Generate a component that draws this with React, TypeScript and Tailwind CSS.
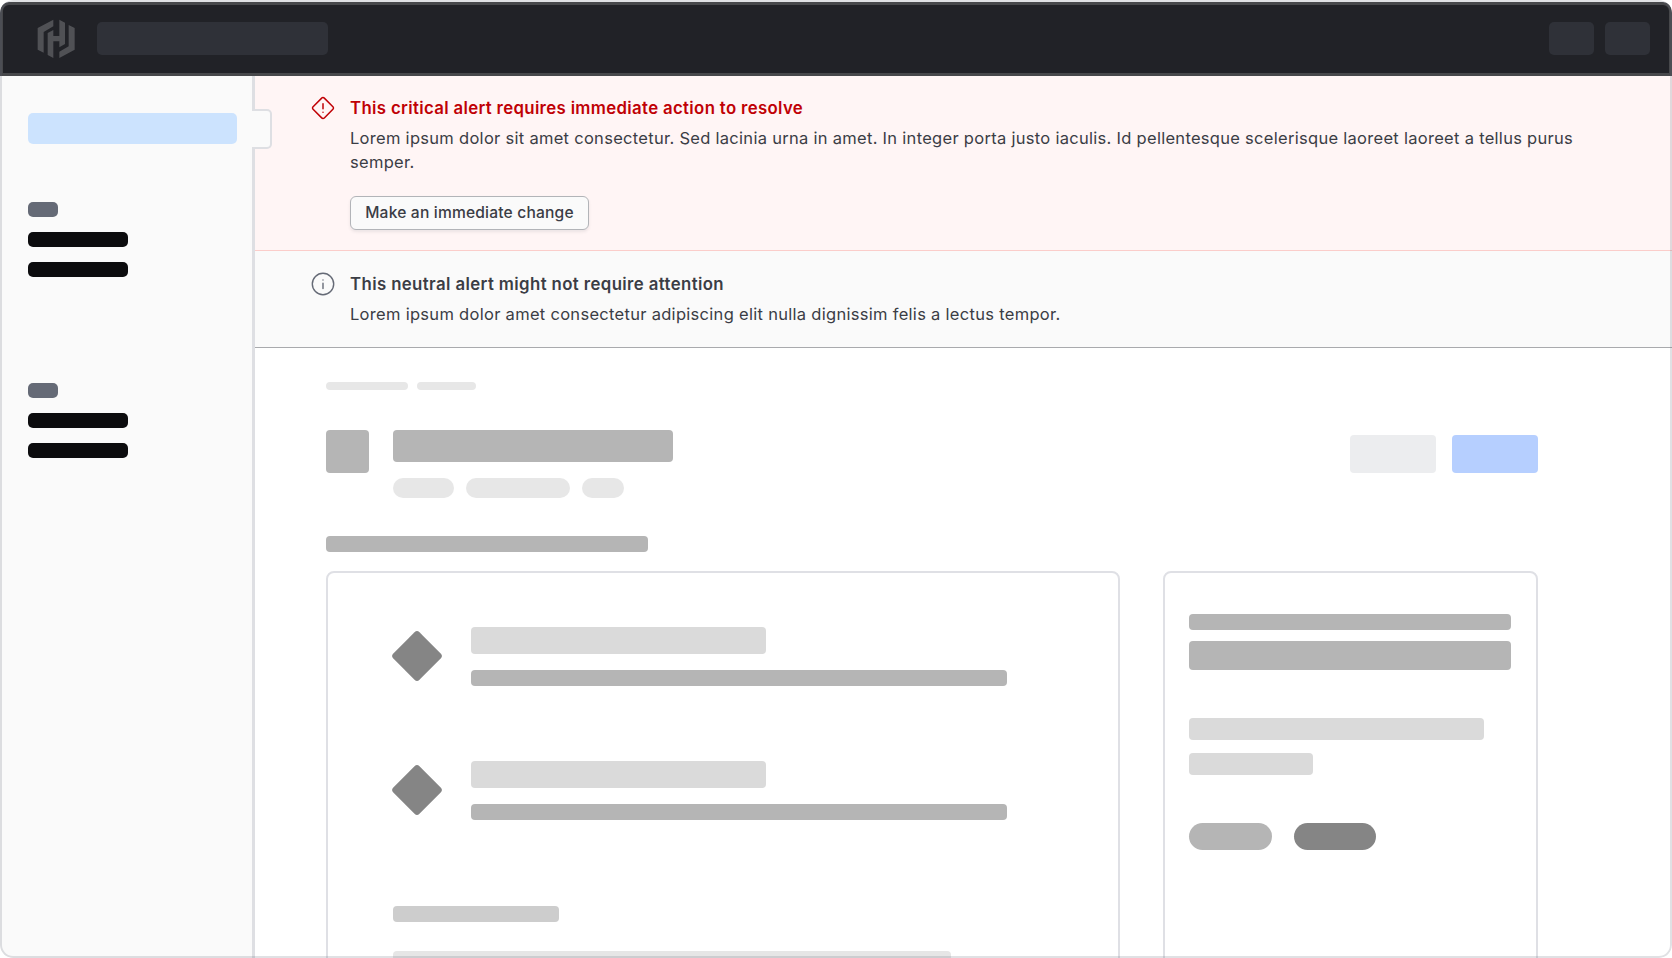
import React from "react";

function Bar({ className }: { className: string }) {
  return <div className={`shrink-0 ${className}`} />;
}

function Logo() {
  return (
    <svg className="ml-[31px] h-[58px] w-[44px]" viewBox="100 30 132 174" fill="#505155">
      <path d="M158 59 111 84V149L129 158V96L158 79Z" />
      <path d="M176 59 193 68V132L176 142V124H158V174L141 165V99L158 90V108H176Z" />
      <path d="M204 75 222 84V149L176 174V155L204 139Z" />
    </svg>
  );
}

function CriticalIcon() {
  return (
    <svg className="-mt-[0.3px] h-6 w-6 shrink-0" viewBox="0 0 24 24" fill="none" stroke="#c00005" strokeWidth="1.5" strokeLinecap="round" strokeLinejoin="round">
      <path d="M10.7 2.100 2.100 10.700a1.800 1.800 0 0 0 0 2.600L10.700 21.900a1.800 1.800 0 0 0 2.600 0L21.900 13.300a1.800 1.800 0 0 0 0-2.600L13.300 2.100a1.800 1.800 0 0 0-2.600 0Z" />
      <path d="M12 7.700v5M12 16.200v.1" />
    </svg>
  );
}

function InfoIcon() {
  return (
    <svg className="-mt-[0.3px] h-6 w-6 shrink-0" viewBox="0 0 24 24" fill="none" stroke="#656a76" strokeWidth="1.4" strokeLinecap="round">
      <circle cx="12" cy="12" r="10.700" />
      <path d="M12 11.300v5.300M12 7.900v.1" />
    </svg>
  );
}

function NavGroup() {
  return (
    <div className="flex flex-col gap-[15px]">
      <Bar className="h-[15.24px] w-[30.500px] rounded-[5px] bg-[#656a76]" />
      <Bar className="h-[15.24px] w-[100.500px] rounded-[5px] bg-[#0c0c0e]" />
      <Bar className="h-[15.24px] w-[100.500px] rounded-[5px] bg-[#0c0c0e]" />
    </div>
  );
}

function ListRow() {
  return (
    <div className="flex h-[134px] items-start">
      <div className="mt-[4px] mr-[28px] h-[51px] w-[51px] shrink-0">
        <svg viewBox="0 0 51 51" fill="#858585">
          <rect x="6.5" y="6.5" width="37" height="37" rx="3.500" transform="rotate(45 25 25)" />
        </svg>
      </div>
      <div className="flex flex-col gap-4">
        <Bar className="h-[27px] w-[295px] rounded-[4px] bg-[#dadada]" />
        <Bar className="h-4 w-[536px] rounded-[4px] bg-[#b5b5b5]" />
      </div>
    </div>
  );
}

export default function App() {
  return (
    <div className="relative flex h-[958px] w-[1672px] flex-col overflow-hidden rounded-[13px] bg-white pt-[2px] font-['Inter',sans-serif]">
      <header className="flex h-[74px] shrink-0 items-center rounded-t-[9px] border-[3px] border-[#47484b] bg-[#212227] pb-px">
        <Logo />
        <Bar className="ml-[19px] h-[33px] w-[231px] rounded-[5px] bg-[#2f3138]" />
        <Bar className="ml-auto h-[33px] w-[45px] rounded-[5px] bg-[#2f3138]" />
        <Bar className="mr-[19px] ml-[11px] h-[33px] w-[45px] rounded-[5px] bg-[#2f3138]" />
      </header>

      <div className="flex min-h-0 flex-1">
        <aside className="relative flex w-[254.500px] shrink-0 flex-col border-r-[3px] border-[#dedfe3] bg-[#fafafa] pt-[37px] pl-[27.500px]">
          <Bar className="h-[30.500px] w-[209.500px] rounded-[5px] bg-[#cce3fe]" />
          <div className="mt-[58px] flex flex-col gap-[105.500px]">
            <NavGroup />
            <NavGroup />
          </div>
          <div className="absolute top-[33px] left-[251.500px] h-10 w-5 rounded-r-[5px] border-2 border-l-0 border-[#dedfe3] bg-[#fafafa]" />
        </aside>

        <main className="flex min-w-0 flex-1 flex-col">
          <section className="flex h-[175px] shrink-0 gap-[15px] border-b border-[#fbcdca] bg-[#fff5f5] pt-[20px] pl-[56.500px]">
            <CriticalIcon />
            <div>
              <h2 className="text-[16.800px] leading-6 font-semibold tracking-[0.340px] text-[#c00005]">
                This critical alert requires immediate action to resolve
              </h2>
              <p className="mt-[6px] w-[1260px] text-[16.500px] leading-[24.300px] tracking-[0.290px] text-[#3b3d45]">
                Lorem ipsum dolor sit amet consectetur. Sed lacinia urna in amet. In integer porta justo iaculis. Id pellentesque scelerisque laoreet laoreet a tellus purus semper.
              </p>
              <button className="mt-[21px] h-[34px] w-[239px] rounded-[6px] border border-[#b2b4b8] bg-[#fafafa] text-[15.600px] font-medium tracking-[0.180px] text-[#3b3d45] shadow-[0_2px_3px_rgba(101,106,118,0.12)]">
                Make an immediate change
              </button>
            </div>
          </section>
          <section className="flex h-[97px] shrink-0 gap-[15px] border-b border-[#a9aaad] bg-[#fafafa] pt-[21px] pl-[56.500px]">
            <InfoIcon />
            <div>
              <h2 className="text-[16.800px] leading-6 font-semibold tracking-[0.390px] text-[#3b3d45]">
                This neutral alert might not require attention
              </h2>
              <p className="mt-[6px] text-[16.500px] leading-[24.300px] tracking-[0.295px] text-[#3b3d45]">
                Lorem ipsum dolor amet consectetur adipiscing elit nulla dignissim felis a lectus tempor.
              </p>
            </div>
          </section>

          <div className="flex min-h-0 flex-1 flex-col overflow-hidden pt-[34px] pl-[71.500px]">
            <div className="flex gap-[9px]">
              <Bar className="h-2 w-[82px] rounded-full bg-[#e7e7e7]" />
              <Bar className="h-2 w-[59px] rounded-full bg-[#e7e7e7]" />
            </div>
            <div className="mt-10 flex w-[1212px] items-start">
              <Bar className="h-[43px] w-[43px] rounded-[4px] bg-[#b5b5b5]" />
              <div className="ml-6 flex flex-col gap-4">
                <Bar className="h-8 w-[280px] rounded-[4px] bg-[#b5b5b5]" />
                <div className="flex gap-3">
                  <Bar className="h-5 w-[61px] rounded-full bg-[#e7e7e7]" />
                  <Bar className="h-5 w-[104px] rounded-full bg-[#e7e7e7]" />
                  <Bar className="h-5 w-[42px] rounded-full bg-[#e7e7e7]" />
                </div>
              </div>
              <div className="mt-[5px] ml-auto flex gap-4">
                <Bar className="h-[38px] w-[86px] rounded-[4px] bg-[#ecedef]" />
                <Bar className="h-[38px] w-[86px] rounded-[4px] bg-[#b6cfff]" />
              </div>
            </div>
            <Bar className="mt-[38px] h-4 w-[322px] rounded-[4px] bg-[#b5b5b5]" />
            <div className="mt-[19px] flex gap-[43px]">
              <div className="h-[400px] w-[794px] rounded-[8px] border-2 border-[#dfe0e5] pt-[54px] pl-[64px]">
                <ListRow />
                <ListRow />
                <Bar className="mt-[11px] ml-px h-4 w-[166px] rounded-[4px] bg-[#cdcdcd]" />
                <Bar className="mt-[29px] ml-px h-4 w-[558px] rounded-[4px] bg-[#e6e6e6]" />
              </div>
              <div className="h-[400px] w-[375px] rounded-[8px] border-2 border-[#dfe0e5] pt-[40.500px] pl-6">
                <Bar className="h-4 w-[322px] rounded-[4px] bg-[#b5b5b5]" />
                <Bar className="mt-[11px] h-[29px] w-[322px] rounded-[4px] bg-[#b5b5b5]" />
                <Bar className="mt-12 h-[22px] w-[295px] rounded-[4px] bg-[#dadada]" />
                <Bar className="mt-[13px] h-[22px] w-[124px] rounded-[4px] bg-[#dadada]" />
                <div className="mt-12 flex gap-[22px]">
                  <Bar className="h-[27px] w-[82.500px] rounded-full bg-[#b5b5b5]" />
                  <Bar className="h-[27px] w-[82.500px] rounded-full bg-[#858585]" />
                </div>
              </div>
            </div>
          </div>
        </main>
      </div>
      <div className="pointer-events-none absolute inset-0 rounded-[13px] border-2 border-[#656a76]/20" />
    </div>
  );
}
